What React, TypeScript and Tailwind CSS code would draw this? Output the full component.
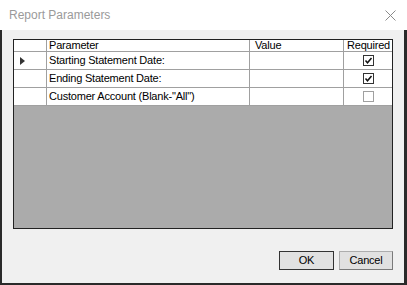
import React from "react";

const rows = [
  { name: "Starting Statement Date:", required: true, current: true },
  { name: "Ending Statement Date:", required: true, current: false },
  { name: 'Customer Account (Blank-"All")', required: false, current: false },
];

function Check({ checked }: { checked: boolean }) {
  return (
    <div
      className={`w-[11px] h-[11px] border bg-white flex items-center justify-center ${
        checked ? "border-[#333333]" : "border-[#a0a0a0]"
      }`}
    >
      {checked && (
        <svg width="9" height="9" viewBox="0 0 9 9">
          <path d="M1.5 4.5 L3.5 6.8 L7.5 2" fill="none" stroke="#111" strokeWidth="1.5" />
        </svg>
      )}
    </div>
  );
}

export default function App() {
  return (
    <div
      className="w-[407px] h-[285px] flex flex-col bg-white text-[11px] text-black tracking-[-0.2px]"
      style={{ fontFamily: '"Liberation Sans", Arial, sans-serif' }}
    >
      {/* title bar */}
      <div className="h-[30px] bg-white flex items-center justify-between pl-[9px] pr-[11px]">
        <span className="text-[12px] text-[#9a9a9a] tracking-normal">Report Parameters</span>
        <svg width="11" height="11" viewBox="0 0 11 11">
          <path d="M0.5 0.5 L10.5 10.5 M10.5 0.5 L0.5 10.5" stroke="#8a8a8a" strokeWidth="1" />
        </svg>
      </div>

      {/* body */}
      <div className="flex-1 flex flex-col bg-[#f0f0f0] border-l-2 border-r-[3px] border-b-2 border-[#2a2a2a]">
        <div className="ml-[11px] mt-[9px] w-[380px] h-[190px] border border-[#222] bg-[#ababab] flex flex-col">
          {/* header */}
          <div className="flex h-[12px] bg-white border-b border-[#a0a0a0] leading-[11px]">
            <div className="w-[33px] border-r border-[#a0a0a0]" />
            <div className="w-[203px] border-r border-[#a0a0a0] pl-[2px]">Parameter</div>
            <div className="w-[94px] border-r border-[#a0a0a0] pl-[5px]">Value</div>
            <div className="flex-1 pl-[3px]">Required</div>
          </div>
          {rows.map((r) => (
            <div key={r.name} className="flex h-[18px] bg-white border-b border-[#a0a0a0]">
              <div className="w-[33px] border-r border-[#a0a0a0] flex items-center pl-[6px]">
                {r.current && (
                  <svg width="5" height="8" viewBox="0 0 5 8">
                    <path d="M0 0 L5 4 L0 8 Z" fill="#333" />
                  </svg>
                )}
              </div>
              <div className="w-[203px] border-r border-[#a0a0a0] pl-[2px] flex items-center">
                {r.name}
              </div>
              <div className="w-[94px] border-r border-[#a0a0a0]" />
              <div className="flex-1 flex items-center justify-center pl-[1px]">
                <Check checked={r.required} />
              </div>
            </div>
          ))}
        </div>

        {/* buttons */}
        <div className="flex justify-end gap-[5px] mt-[22px] mr-[11px]">
          <button className="w-[55px] h-[19px] bg-[#e1e1e1] border border-[#333] text-[11px] flex items-center justify-center">
            OK
          </button>
          <button className="w-[54px] h-[19px] bg-[#e1e1e1] border border-[#adadad] border-r-[#7a7a7a] border-b-[#7a7a7a] text-[11px] flex items-center justify-center">
            Cancel
          </button>
        </div>
      </div>
    </div>
  );
}
